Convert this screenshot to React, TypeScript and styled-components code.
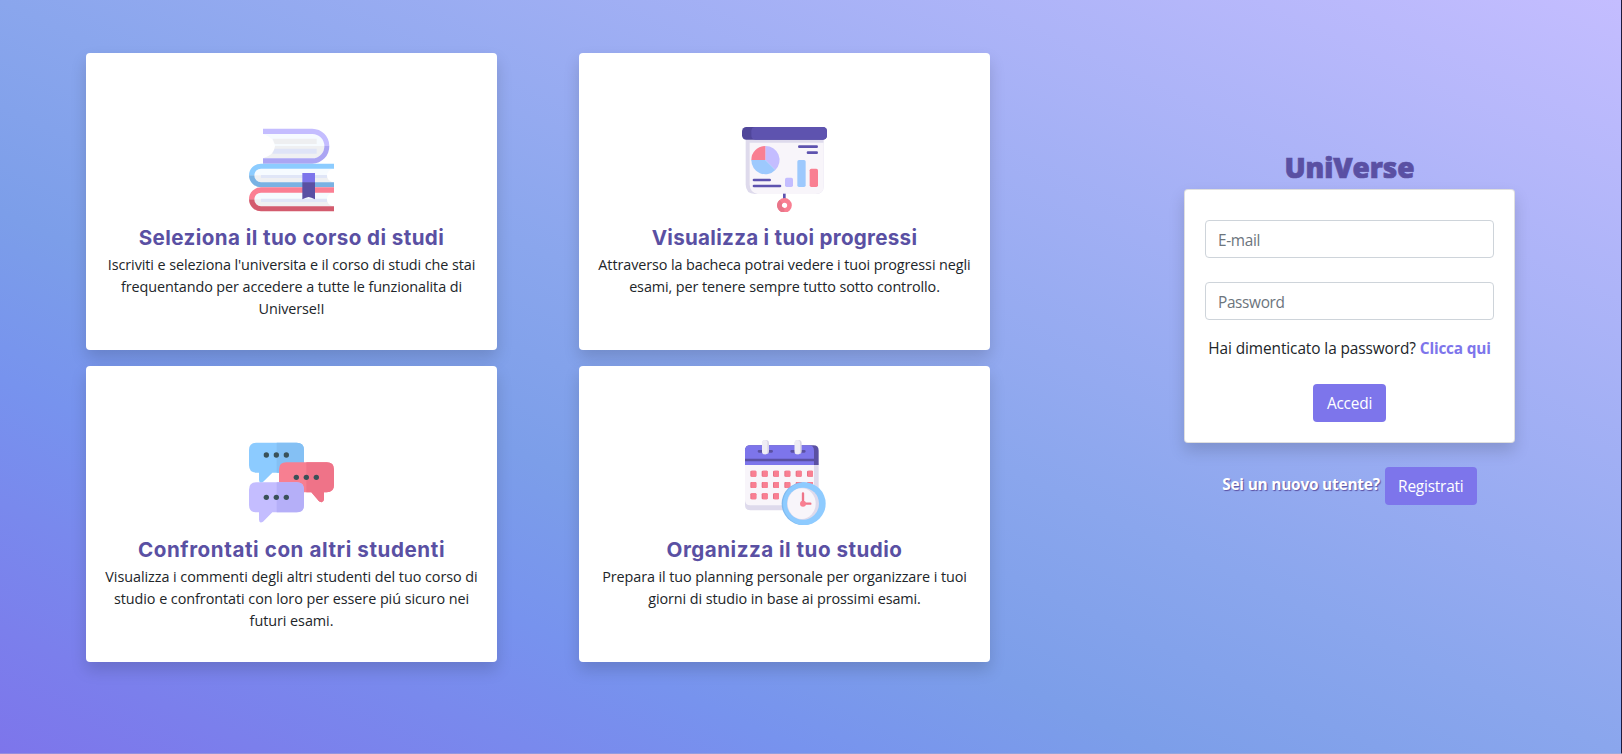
import React from 'react';
import styled, { createGlobalStyle } from 'styled-components';

const GlobalStyle = createGlobalStyle`
  *, *::before, *::after { box-sizing: border-box; }
  body {
    margin: 0;
    font-family: "Open Sans", "Noto Sans", sans-serif;
    font-size: 15.4px;
    line-height: 24px;
    color: #212529;
    overflow: hidden;
  }
`;

const Page = styled.main`
  display: flex;
  align-items: flex-start;
  height: 754px;
  padding: 53px 0 0 86px;
  border-right: 1px solid #1f1a3d;
  border-bottom: 1px solid rgba(190, 180, 200, 0.4);
  background: linear-gradient(to top right, #7d75eb, #7793ee 25%, #7c9ee9 36%, #8aa6ed 50%, #c4bdff) border-box;
`;

const Features = styled.section`
  display: grid;
  grid-template-columns: 411px 411px;
  grid-template-rows: 296.6px 296.6px;
  column-gap: 82px;
  row-gap: 16px;
`;

const FeatureCard = styled.article`
  display: flex;
  flex-direction: column;
  align-items: center;
  padding-top: 74px;
  border-radius: 4px;
  background: #fff;
  box-shadow: 0 8px 16px rgba(0, 0, 0, 0.15);
  text-align: center;
`;

const Art = styled.svg`
  display: block;
  flex: none;
  width: 85px;
  height: 85px;
`;

const FeatureTitle = styled.h2<{ $tracking: number }>`
  margin: 13.6px 0 4px;
  font: 700 20.6px/24px Inter, sans-serif;
  letter-spacing: ${(p) => p.$tracking}px;
  color: #5a50a3;
`;

const FeatureText = styled.p<{ $tracking: number }>`
  margin: 0;
  font-size: 14.4px;
  line-height: 22px;
  letter-spacing: ${(p) => p.$tracking}px;
`;

const Line = styled.span`
  display: block;
  white-space: nowrap;
`;

const Account = styled.section`
  display: flex;
  flex-direction: column;
  align-items: center;
  width: 331px;
  margin: 94px 0 0 194px;
`;

const Brand = styled.h1`
  margin: 0 0 1px;
  font-size: 28px;
  font-weight: 800;
  line-height: 41px;
  letter-spacing: -0.1px;
  color: #5a50a3;
  -webkit-text-stroke: 0.7px #5a50a3;
`;

const LoginCard = styled.form`
  display: flex;
  flex-direction: column;
  align-items: center;
  width: 331px;
  height: 254px;
  padding: 30px 20px 0;
  border: 1px solid rgba(0, 0, 0, 0.125);
  border-radius: 4px;
  background: #fff;
  background-clip: border-box;
  box-shadow: 0 8px 16px rgba(0, 0, 0, 0.15);
`;

const Field = styled.input`
  width: 100%;
  height: 38px;
  margin: 0 0 24px;
  padding: 8px 12px 6px;
  border: 1px solid #ced4da;
  border-radius: 4px;
  font: inherit;
  letter-spacing: -0.35px;
  &::placeholder { color: #6c757d; opacity: 1; }
`;

const Forgot = styled.p`
  margin: -7px 0 23px;
  white-space: nowrap;
  letter-spacing: -0.09px;
`;

const Link = styled.a`
  font-weight: 700;
  letter-spacing: -0.2px;
  color: #7d75eb;
`;

const Button = styled.button<{ $width: number }>`
  width: ${(p) => p.$width}px;
  height: 38px;
  padding: 2px 0 0;
  border: 0;
  border-radius: 4px;
  background: #7d75eb;
  color: #fff;
  font: inherit;
  letter-spacing: -0.2px;
`;

const SignUp = styled.div`
  display: flex;
  gap: 5px;
  margin-top: 24px;
`;

const SignUpText = styled.span`
  padding-top: 6px;
  font-weight: 700;
  letter-spacing: -0.2px;
  color: #fff;
  text-shadow: 1px 1px 1px #5a50a3;
`;

const BooksIcon = () => (
  <Art viewBox="42 36 255 255">
    <path d="M84 57H232A36 36 0 0 1 268 93H120Q118 68 84 57Z" fill="#f6fbff" />
    <path d="M120 93H268A36 36 0 0 1 232 130H84Q118 120 120 93Z" fill="#eff0f2" />
    <path d="M113 71H245V87H119Z" fill="#eeeff1" />
    <path d="M119 101H245V116H112Z" fill="#dfe4f7" />
    <path d="M84 41H232A52 52 0 0 1 283 93H268A36 36 0 0 0 232 57H84Z" fill="#c4bdff" />
    <path d="M84 146H232A52 52 0 0 0 283 93H268A36 36 0 0 1 232 130H84Z" fill="#aba5f3" />
    <path d="M58 181A22 20 0 0 1 80 161H297Q276 164 276 181Z" fill="#f6fbff" />
    <path d="M58 181A22 22 0 0 0 80 203H297Q276 199 276 181Z" fill="#eff0f2" />
    <path d="M78 180H276V189H78Z" fill="#e0e6f7" />
    <path d="M297 146H78A36 35 0 0 0 42 181H58A20 20 0 0 1 78 161H297Z" fill="#8cccff" />
    <path d="M42 181A36 36 0 0 0 78 217H297V202H78A20 21 0 0 1 58 181Z" fill="#7ab2e3" />
    <path d="M58 253A22 22 0 0 1 80 231H297Q276 236 276 253Z" fill="#f6fbff" />
    <path d="M58 253A22 22 0 0 0 80 275H297Q276 271 276 253Z" fill="#eff0f2" />
    <path d="M78 251H276V261H78Z" fill="#e0e6f7" />
    <path d="M297 217H78A36 36 0 0 0 42 253H58A20 20 0 0 1 78 233H297Z" fill="#fb7f93" />
    <path d="M42 253A36 36 0 0 0 78 289H297V274H78A20 21 0 0 1 58 253Z" fill="#d35b6e" />
    <path d="M202 174H240V203H202Z" fill="#7d75eb" />
    <path d="M202 202H240V253Q228 247 221 246Q214 247 202 253Z" fill="#5a50a3" />
  </Art>
);

const BoardIcon = () => (
  <Art viewBox="51 36 255 255">
    <path d="M62 72H296V213Q296 237 272 237H90Q62 237 62 208Z" fill="#dedaec" />
    <path d="M74 83H296V213Q296 237 272 237H98Q74 232 74 208Z" fill="#f8f5fa" />
    <rect x="51" y="36" width="255" height="38" rx="13" fill="#50469a" />
    <path d="M92 36H293Q306 36 306 49V61Q306 74 293 74H92Q79 74 79 61V49Q79 36 92 36Z" fill="#5e53af" />
    <path d="M121 135V93A42 42 0 0 1 151 165Z" fill="#c4bdff" />
    <path d="M121 135L151 165A42 42 0 0 1 79 135Z" fill="#9dc9fd" />
    <path d="M121 135H79A42 42 0 0 1 121 93Z" fill="#f97f92" />
    <path d="M223 95H275M249 113H275M87 195H134M87 213H165" stroke="#5e53af" strokeWidth="8" strokeLinecap="round" />
    <rect x="180" y="188" width="24" height="28" rx="5" fill="#c4bdff" />
    <rect x="217" y="135" width="25" height="81" rx="5" fill="#9dc9fd" />
    <rect x="254" y="161" width="25" height="55" rx="5" fill="#f97f92" />
    <path d="M174 236H182V254H174Z" fill="#5e53af" />
    <circle cx="178.5" cy="271" r="15" fill="none" stroke="#f97f92" strokeWidth="14" />
    <path d="M178 286A15 15 0 0 1 168 260" fill="none" stroke="#e97589" strokeWidth="14" />
  </Art>
);

const Dots = ({ x, y }: { x: number; y: number }) => (
  <g fill="#3a5158">
    <circle cx={x} cy={y} r="8" />
    <circle cx={x + 30} cy={y} r="8" />
    <circle cx={x + 60} cy={y} r="8" />
  </g>
);

const ChatIcon = () => (
  <Art viewBox="42 30 255 255">
    <path d="M64 38H185Q207 38 207 60V106Q207 128 185 128H112L84 156Q73 163 72 150V128H64Q42 128 42 106V60Q42 38 64 38Z" fill="#8ccbff" />
    <path d="M125 38H185Q207 38 207 60V106Q207 128 185 128H125Z" fill="#84c0f4" />
    <Dots x={94} y={75} />
    <path d="M154 97H275Q297 97 297 119V165Q297 187 275 187H267V208Q265 222 252 214L229 187H154Q132 187 132 165V119Q132 97 154 97Z" fill="#f77f91" />
    <path d="M214 97H275Q297 97 297 119V165Q297 187 275 187H267V208Q265 222 252 214L229 187H214Z" fill="#ef7388" />
    <Dots x={184} y={142} />
    <path d="M64 157H185Q207 157 207 179V225Q207 247 185 247H112L84 275Q73 282 72 269V247H64Q42 247 42 225V179Q42 157 64 157Z" fill="#c4bdff" />
    <path d="M125 157H185Q207 157 207 179V225Q207 247 185 247H125Z" fill="#b5aff8" />
    <Dots x={94} y={202} />
  </Art>
);

const CalendarIcon = () => (
  <Art viewBox="51 30 255 255">
    <path d="M60 100H281V225Q281 241 265 241H76Q60 241 60 225Z" fill="#dedaec" />
    <path d="M60 100H267V210Q267 226 251 226H76Q60 226 60 210Z" fill="#f8f5fa" />
    <path d="M76 46H265Q281 46 281 62V105H60V62Q60 46 76 46Z" fill="#5a50a3" />
    <path d="M76 46H251Q267 46 267 62V105H60V62Q60 46 76 46Z" fill="#7d75eb" />
    <path d="M60 86H267V94H60Z" fill="#5a50a3" />
    <path d="M102 64H140M200 64H238" stroke="#5a50a3" strokeWidth="8" strokeLinecap="round" />
    <rect x="111" y="30" width="21" height="43" rx="10" fill="#d9d5e6" />
    <rect x="111" y="30" width="16" height="43" rx="8" fill="#efedf5" />
    <rect x="209" y="30" width="21" height="43" rx="10" fill="#d9d5e6" />
    <rect x="209" y="30" width="16" height="43" rx="8" fill="#efedf5" />
    {[122, 156, 190].map((y) =>
      [76, 110, 144, 178, 212, 246].map((x) => (
        <g key={`${x}-${y}`}>
          <rect x={x} y={y} width="18" height="18" rx="3" fill="#e56f83" />
          <rect x={x + 3} y={y} width="15" height="18" rx="3" fill="#f97f92" />
        </g>
      )),
    )}
    <circle cx="234" cy="221" r="64" fill="#7fbaf0" />
    <path d="M238 157A64 64 0 0 1 238 285A64 64 0 0 1 238 157Z" fill="#8ecbff" />
    <circle cx="234" cy="221" r="48" fill="#dedaec" />
    <ellipse cx="230" cy="221" rx="42" ry="46" fill="#f8f5fa" />
    <path d="M234 190V221H256" fill="none" stroke="#ee7589" strokeWidth="7" strokeLinecap="round" />
    <circle cx="234" cy="221" r="9" fill="#f97f92" />
  </Art>
);

const features = [
  {
    Icon: BooksIcon,
    title: 'Seleziona il tuo corso di studi',
    tracking: 0.41,
    textTracking: -0.09,
    lines: [
      "Iscriviti e seleziona l'universita e il corso di studi che stai",
      'frequentando per accedere a tutte le funzionalita di',
      'Universe!I',
    ],
  },
  {
    Icon: BoardIcon,
    title: 'Visualizza i tuoi progressi',
    tracking: 0.28,
    textTracking: -0.09,
    lines: [
      'Attraverso la bacheca potrai vedere i tuoi progressi negli',
      'esami, per tenere sempre tutto sotto controllo.',
    ],
  },
  {
    Icon: ChatIcon,
    title: 'Confrontati con altri studenti',
    tracking: 0.58,
    textTracking: -0.06,
    lines: [
      'Visualizza i commenti degli altri studenti del tuo corso di',
      'studio e confrontati con loro per essere piú sicuro nei',
      'futuri esami.',
    ],
  },
  {
    Icon: CalendarIcon,
    title: 'Organizza il tuo studio',
    tracking: 0.49,
    textTracking: -0.08,
    lines: [
      'Prepara il tuo planning personale per organizzare i tuoi',
      'giorni di studio in base ai prossimi esami.',
    ],
  },
];

export default function App() {
  return (
    <>
      <GlobalStyle />
      <Page>
        <Features>
          {features.map(({ Icon, title, tracking, textTracking, lines }) => (
            <FeatureCard key={title}>
              <Icon />
              <FeatureTitle $tracking={tracking}>{title}</FeatureTitle>
              <FeatureText $tracking={textTracking}>
                {lines.map((line) => (
                  <Line key={line}>{line}</Line>
                ))}
              </FeatureText>
            </FeatureCard>
          ))}
        </Features>
        <Account>
          <Brand>UniVerse</Brand>
          <LoginCard>
            <Field type="email" placeholder="E-mail" />
            <Field type="password" placeholder="Password" />
            <Forgot>
              Hai dimenticato la password? <Link>Clicca qui</Link>
            </Forgot>
            <Button type="button" $width={73}>Accedi</Button>
          </LoginCard>
          <SignUp>
            <SignUpText>Sei un nuovo utente?</SignUpText>
            <Button type="button" $width={92}>Registrati</Button>
          </SignUp>
        </Account>
      </Page>
    </>
  );
}
